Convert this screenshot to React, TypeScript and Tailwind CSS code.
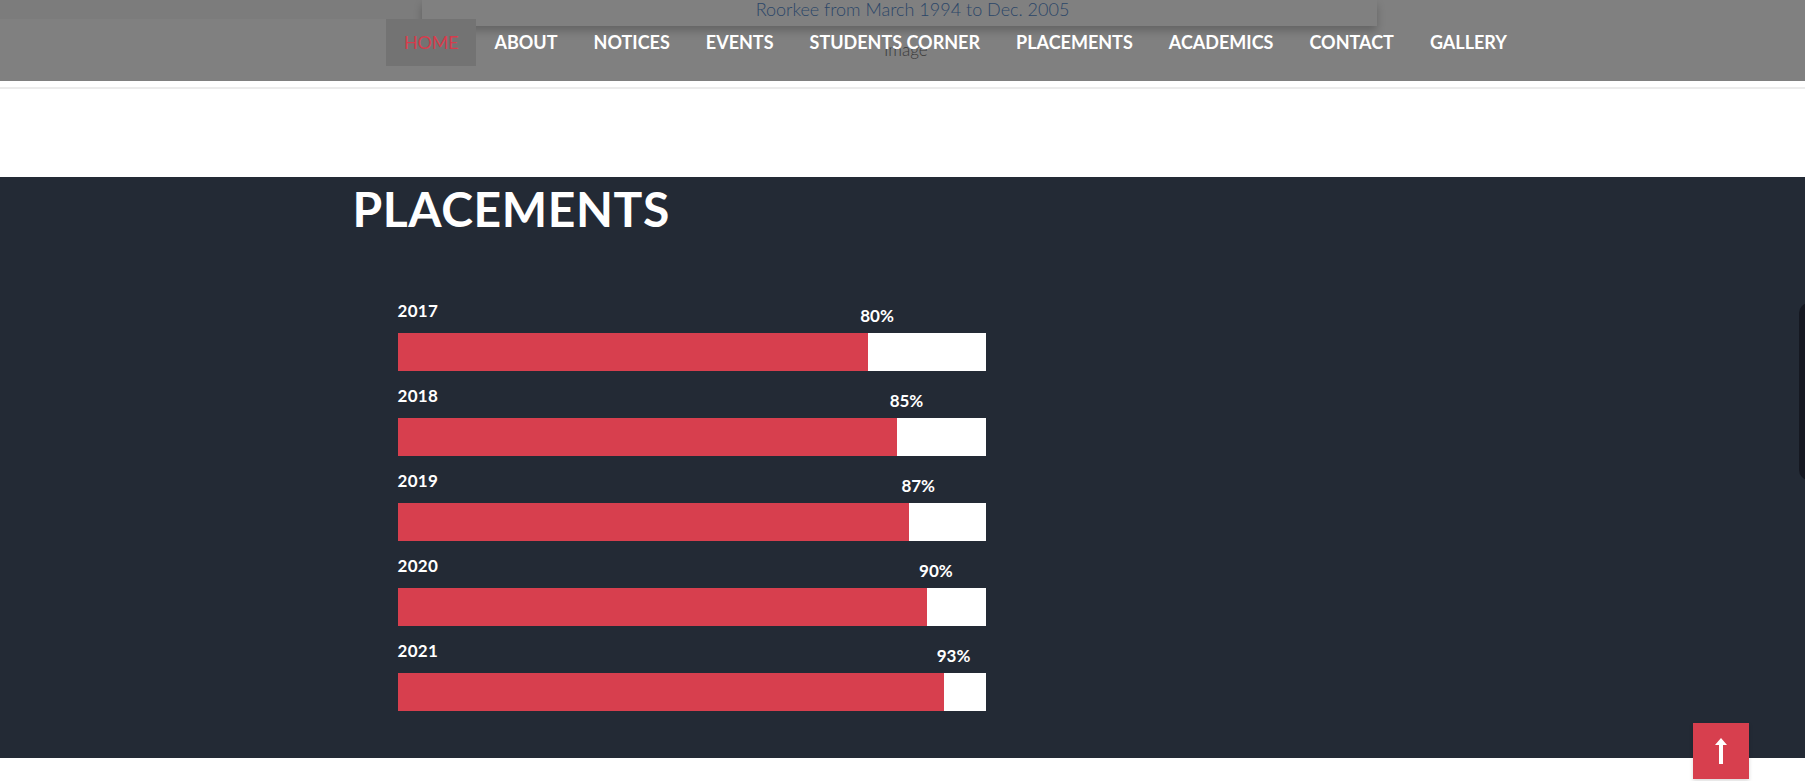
import React from "react";

const navItems = [
  "HOME",
  "ABOUT",
  "NOTICES",
  "EVENTS",
  "STUDENTS CORNER",
  "PLACEMENTS",
  "ACADEMICS",
  "CONTACT",
  "GALLERY",
];

const stats = [
  { year: "2017", pct: 80 },
  { year: "2018", pct: 85 },
  { year: "2019", pct: 87 },
  { year: "2020", pct: 90 },
  { year: "2021", pct: 93 },
];

export default function App() {
  return (
    <div className="relative w-[1805px] h-[781px] overflow-hidden bg-white font-['Lato','Noto_Sans',sans-serif]">
      {/* Header overlay */}
      <div className="relative h-[81px] bg-[#808080]">
        <div className="absolute left-0 top-0 w-[422px] h-[19px] bg-[#7c7c7c]" />
        <div className="absolute left-[422px] top-0 w-[955px] h-[26px] pl-[26px] bg-[#808080] shadow-[0_5px_8px_rgba(0,0,0,0.22)] flex items-start justify-center">
          <span className="text-[18px] leading-[19px] font-light text-[#2b4668]">
            Roorkee from March 1994 to Dec. 2005
          </span>
        </div>
        <span className="absolute left-[884px] top-[38px] text-[17px] leading-[24px] font-light text-[#3a3a3a]">
          Image
        </span>
        <nav className="relative flex pl-[386px] pt-[19px]">
          {navItems.map((item, i) => (
            <div
              key={item}
              className={
                i === 0
                  ? "h-[47px] px-[18px] flex items-center bg-[#737373] text-[#d63c4c] text-[18px] font-normal tracking-[-0.2px]"
                  : "h-[47px] px-[18px] flex items-center text-white text-[18px] font-bold tracking-[0px]"
              }
            >
              {item}
            </div>
          ))}
        </nav>
      </div>

      <div className="mt-[6px] h-[2px] bg-[#ececec]" />
      <div className="h-[88px]" />

      {/* Placements section */}
      <section className="h-[581px] bg-[#232a35]">
        <div className="w-[1140px] mx-auto px-[20px] pt-[3px]">
          <h2 className="text-[48px] leading-[58px] font-bold text-white tracking-[0.6px]">
            PLACEMENTS
          </h2>
          <div className="pl-[45px] pt-[61px] flex flex-col">
            {stats.map((s) => (
              <div key={s.year} className="w-[588px] mb-[13px]">
                <div className="text-[17px] leading-[24px] font-bold text-white tracking-[0.3px]">{s.year}</div>
                <div className="relative mt-[10px] h-[38px] bg-white">
                  <div className="relative h-full bg-[#d73f4e]" style={{ width: `${s.pct}%` }}>
                    <span className="absolute right-[-26px] top-[-29px] text-[17px] leading-[24px] font-bold text-white">
                      {s.pct}%
                    </span>
                  </div>
                </div>
              </div>
            ))}
          </div>
        </div>
      </section>

      {/* Side widget */}
      <div className="absolute right-[-20px] top-[303px] w-[26px] h-[177px] rounded-[10px] bg-[#151821]" />

      {/* Back to top */}
      <div className="absolute left-[1693px] top-[723px] w-[56px] h-[56px] bg-[#d73f4e] flex items-center justify-center shadow-[0_2px_4px_rgba(0,0,0,0.15)]">
        <svg width="14" height="26" viewBox="0 0 14 26" fill="white">
          <path d="M7 0 L13 7 L9 7 L9 26 L5 26 L5 7 L1 7 Z" />
        </svg>
      </div>
    </div>
  );
}
